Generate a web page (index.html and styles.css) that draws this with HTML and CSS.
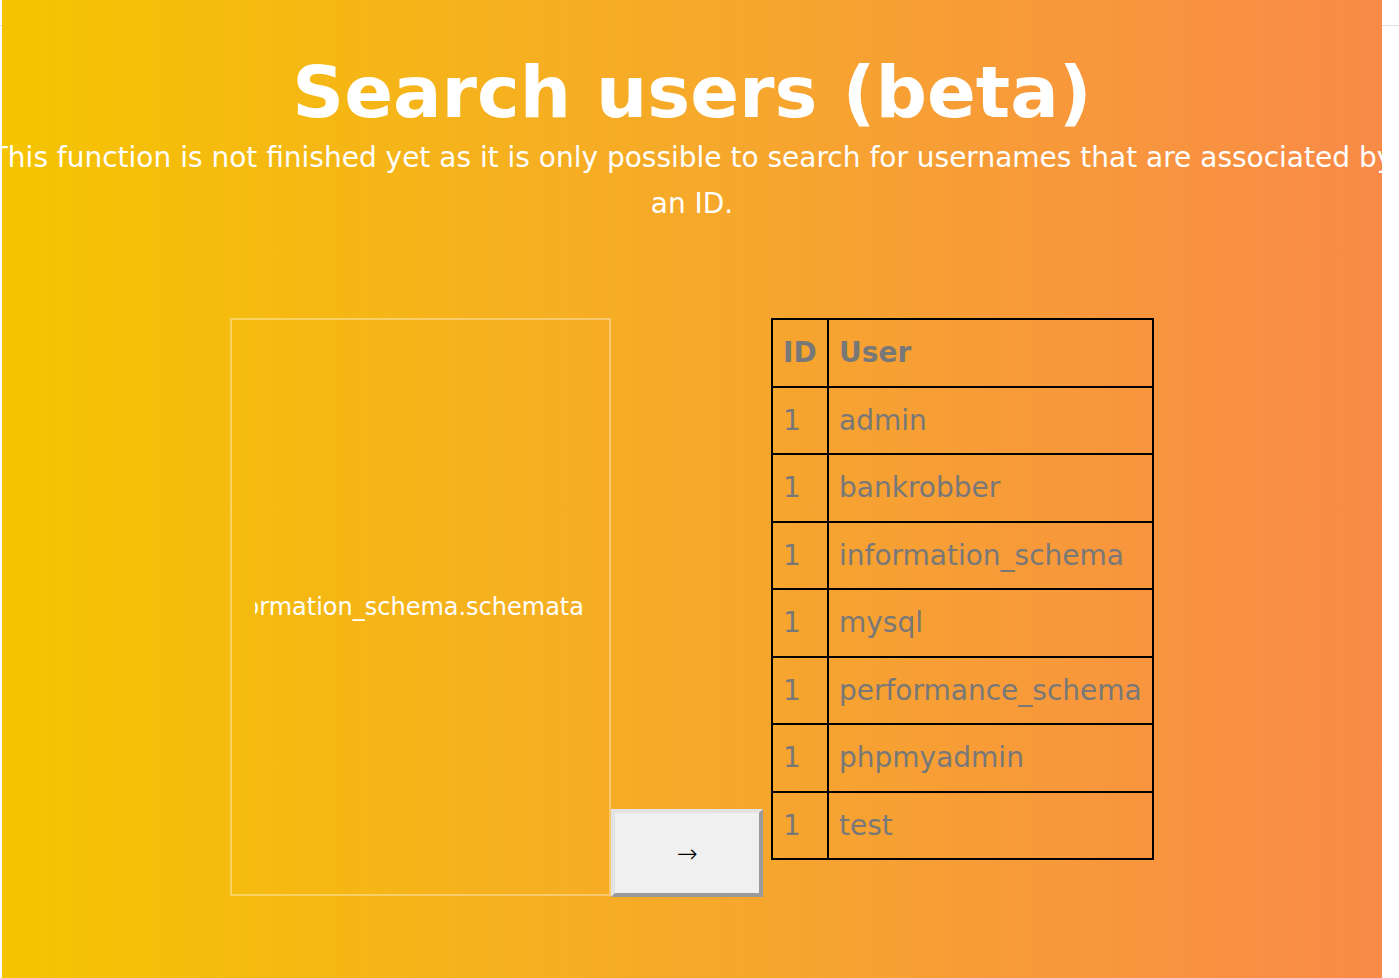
FILE: index.html
```html
<!DOCTYPE html>
<html lang="en">
<head>
<meta charset="utf-8">
<title>Search users (beta)</title>
<link rel="stylesheet" href="styles.css">
</head>
<body>
<main class="page">
  <h1 class="title">Search users (beta)</h1>
  <p class="lead">This function is not finished yet as it is only possible to search for usernames that are associated by an ID.</p>
  <div class="search">
    <div class="field"><div class="field-value"><span>1 union select 1,schema_name from information_schema.schemata</span></div></div>
    <button class="go" type="button">&rarr;</button>
    <table class="results">
      <thead>
        <tr><th class="col-id">ID</th><th>User</th></tr>
      </thead>
      <tbody>
        <tr><td>1</td><td>admin</td></tr>
        <tr><td>1</td><td>bankrobber</td></tr>
        <tr><td>1</td><td>information_schema</td></tr>
        <tr><td>1</td><td>mysql</td></tr>
        <tr><td>1</td><td>performance_schema</td></tr>
        <tr><td>1</td><td>phpmyadmin</td></tr>
        <tr><td>1</td><td>test</td></tr>
      </tbody>
    </table>
  </div>
</main>
</body>
</html>
```

FILE: styles.css
```css
html, body {
  margin: 0;
  padding: 0;
}
body {
  background: linear-gradient(#ffffff 25px, #dedede 25px, #dedede 26px, #ffffff 26px) no-repeat;
  background-color: #ffffff;
  font-family: "DejaVu Sans", sans-serif;
  overflow: hidden;
}
.page {
  margin-left: 2px;
  width: 1380px;
  height: 978px;
  overflow: hidden;
  background: linear-gradient(to right, #f5c400 0%, #f6a92a 50%, #f98a48 100%);
  display: flex;
  flex-direction: column;
  align-items: center;
  color: #ffffff;
}
.title {
  margin: 50px 0 0;
  font-size: 72px;
  font-weight: bold;
  line-height: 84px;
  white-space: nowrap;
}
.lead {
  flex-shrink: 0;
  width: 1430px;
  margin: 1px 0 0;
  font-size: 28px;
  line-height: 46px;
  text-align: center;
}
.search {
  display: flex;
  align-items: flex-end;
  margin-top: 91px;
}
.field {
  box-sizing: border-box;
  width: 381px;
  height: 578px;
  border: 2px solid rgba(255, 255, 255, 0.35);
  padding: 0 25px 0 23px;
  display: flex;
  align-items: center;
}
.field-value {
  width: 100%;
  overflow: hidden;
  display: flex;
  justify-content: flex-end;
  white-space: nowrap;
  font-size: 24px;
  color: #ffffff;
}
.field-value span {
  flex-shrink: 0;
}
.go {
  box-sizing: border-box;
  width: 152px;
  height: 88px;
  margin: 0;
  padding: 0;
  background: #f0f0f0;
  border: 4px solid;
  border-color: #e3e3e3 #9a9a9a #9a9a9a #e3e3e3;
  font-family: "DejaVu Sans", sans-serif;
  font-size: 25px;
  font-weight: 200;
  color: #000000;
  margin-bottom: -1px;
}
.results {
  align-self: flex-start;
  margin-left: 8px;
  border-collapse: collapse;
  font-size: 28px;
  color: #787878;
}
.results th,
.results td {
  border: 2px solid #000000;
  height: 67.5px;
  box-sizing: border-box;
  padding: 0 10px;
  text-align: left;
  vertical-align: middle;
}
.results th {
  font-weight: bold;
}
.results td:last-child,
.results th:last-child {
  width: 325px;
}
.col-id {
  width: 56px;
}
```
